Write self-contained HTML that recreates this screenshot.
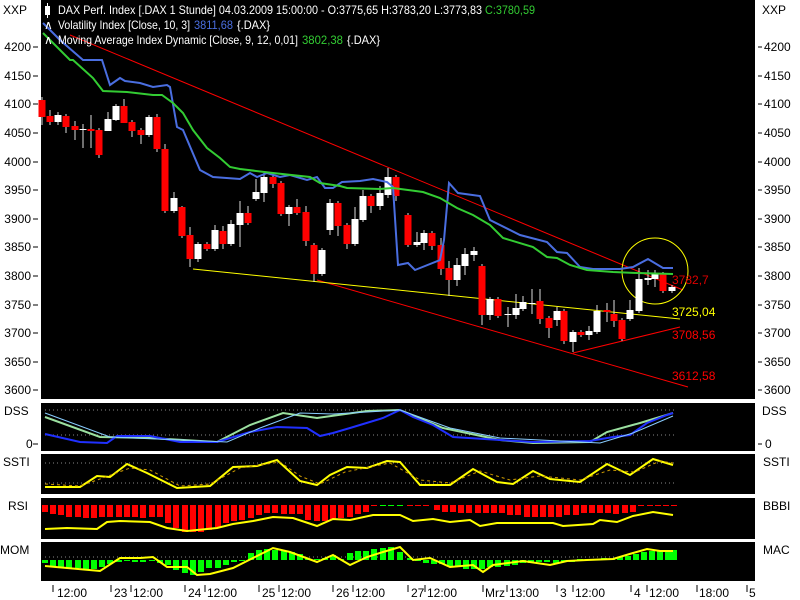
<!DOCTYPE html>
<html><head><meta charset="utf-8"><style>
html,body{margin:0;padding:0;background:#fff;width:800px;height:600px;overflow:hidden}
svg{display:block;font-family:"Liberation Sans",sans-serif;font-size:12px}
</style></head><body>
<svg width="800" height="600" viewBox="0 0 800 600" xmlns="http://www.w3.org/2000/svg">
<rect x="0" y="0" width="800" height="600" fill="#fff"/>
<rect x="41" y="0" width="714" height="399" fill="#000"/>
<rect x="41" y="403" width="714" height="48" fill="#000"/>
<rect x="41" y="454" width="714" height="40" fill="#000"/>
<rect x="41" y="498" width="714" height="41" fill="#000"/>
<rect x="41" y="542" width="714" height="39" fill="#000"/>

<!-- trend lines -->
<line x1="70" y1="35" x2="683" y2="290" stroke="#f00" stroke-width="1"/>
<line x1="317" y1="280" x2="688" y2="387" stroke="#f00" stroke-width="1"/>
<line x1="573" y1="353" x2="680" y2="327" stroke="#f00" stroke-width="1"/>
<line x1="193" y1="269" x2="680" y2="319" stroke="#ff0" stroke-width="1"/>
<circle cx="655" cy="271" r="33" fill="none" stroke="#ff0" stroke-width="1"/>

<!-- candles -->
<g stroke="#ddd" stroke-width="1">
<path d="M42 97V125M50 110V125M58 112V125M66 114V133M75 121V140M83 124V148M91 115V148M99 128V158M108 112V131M116 104V121M124 99V123M132 120V137M141 128V144M149 115V137M157 114V152M165 144V213M174 192V213M182 206V238M190 227V267M198 242V262M207 242V251M215 225V251M223 226V249M231 220V246M240 201V247M248 206V225M256 179V201M264 173V202M273 175V188M281 181V216M289 205V226M297 199V215M306 206V246M314 243V282M322 248V276M330 199V235M338 201V236M347 223V249M355 207V246M363 190V222M371 194V213M380 186V210M388 168V198M396 175V201M408 213V247M417 232V247M424 230V250M432 231V250M441 238V275M449 261V296M457 258V286M465 248V275M474 247V261M482 264V325M490 297V320M498 297V318M508 307V327M516 294V319M523 296V311M532 289V314M540 289V324M549 316V338M557 307V326M564 309V344M573 330V352M581 330V337M589 326V340M597 305V334M607 303V322M614 300V327M622 318V341M630 300V321M639 268V313M648 270V285M655 270V287M663 272V293M672 285V293"/>
</g>
<g fill="#f00">
<rect x="38.5" y="100" width="7" height="17"/><rect x="46.5" y="116" width="7" height="6"/><rect x="62.5" y="116" width="7" height="11"/><rect x="71.5" y="126" width="7" height="4"/><rect x="87.5" y="129" width="7" height="2"/><rect x="95.5" y="130" width="7" height="25"/><rect x="120.5" y="106" width="7" height="17"/><rect x="128.5" y="122" width="7" height="9"/><rect x="137.5" y="130" width="7" height="5"/><rect x="153.5" y="117" width="7" height="32"/><rect x="161.5" y="149" width="7" height="62"/><rect x="178.5" y="207" width="7" height="29"/><rect x="186.5" y="235" width="7" height="24"/><rect x="203.5" y="244" width="7" height="5"/><rect x="219.5" y="231" width="7" height="13"/><rect x="244.5" y="213" width="7" height="10"/><rect x="269.5" y="177" width="7" height="7"/><rect x="277.5" y="183" width="7" height="31"/><rect x="293.5" y="207" width="7" height="6"/><rect x="302.5" y="212" width="7" height="29"/><rect x="310.5" y="245" width="7" height="29"/><rect x="334.5" y="203" width="7" height="23"/><rect x="343.5" y="225" width="7" height="19"/><rect x="367.5" y="196" width="7" height="10"/><rect x="392.5" y="177" width="7" height="19"/><rect x="404.5" y="215" width="7" height="30"/><rect x="428.5" y="233" width="7" height="13"/><rect x="437.5" y="245" width="7" height="24"/><rect x="445.5" y="268" width="7" height="12"/><rect x="478.5" y="266" width="7" height="49"/><rect x="494.5" y="299" width="7" height="17"/><rect x="536.5" y="301" width="7" height="18"/><rect x="545.5" y="318" width="7" height="10"/><rect x="560.5" y="311" width="7" height="30"/><rect x="577.5" y="332" width="7" height="3"/><rect x="603.5" y="310" width="7" height="2"/><rect x="610.5" y="314" width="7" height="7"/><rect x="618.5" y="320" width="7" height="19"/><rect x="659.5" y="274" width="7" height="17"/>
</g>
<g fill="#fff">
<rect x="54.5" y="115" width="7" height="7"/><rect x="79.5" y="129" width="7" height="1"/><rect x="104.5" y="119" width="7" height="12"/><rect x="112.5" y="106" width="7" height="14"/><rect x="145.5" y="117" width="7" height="18"/><rect x="170.5" y="198" width="7" height="13"/><rect x="194.5" y="244" width="7" height="15"/><rect x="211.5" y="230" width="7" height="19"/><rect x="227.5" y="224" width="7" height="20"/><rect x="236.5" y="213" width="7" height="12"/><rect x="252.5" y="192" width="7" height="7"/><rect x="260.5" y="177" width="7" height="16"/><rect x="285.5" y="207" width="7" height="7"/><rect x="318.5" y="250" width="7" height="24"/><rect x="326.5" y="203" width="7" height="27"/><rect x="351.5" y="219" width="7" height="25"/><rect x="359.5" y="196" width="7" height="24"/><rect x="376.5" y="193" width="7" height="13"/><rect x="384.5" y="177" width="7" height="18"/><rect x="413.5" y="242" width="7" height="3"/><rect x="420.5" y="233" width="7" height="10"/><rect x="453.5" y="265" width="7" height="15"/><rect x="461.5" y="254" width="7" height="12"/><rect x="470.5" y="251" width="7" height="4"/><rect x="486.5" y="299" width="7" height="16"/><rect x="504.5" y="314" width="7" height="1"/><rect x="512.5" y="308" width="7" height="7"/><rect x="519.5" y="302" width="7" height="7"/><rect x="528.5" y="303" width="7" height="1"/><rect x="553.5" y="311" width="7" height="9"/><rect x="569.5" y="332" width="7" height="10"/><rect x="585.5" y="331" width="7" height="4"/><rect x="593.5" y="311" width="7" height="21"/><rect x="626.5" y="310" width="7" height="9"/><rect x="635.5" y="279" width="7" height="32"/><rect x="644.5" y="278" width="7" height="2"/><rect x="651.5" y="274" width="7" height="5"/><rect x="668.5" y="287" width="7" height="4"/>
</g>

<!-- blue and green lines -->
<polyline fill="none" stroke="#4a6ee0" stroke-width="2" points="43,23 60,40 83,60 102,60 110,85 120,78 125,81 140,83 153,87 167,85 170,87 177,127 183,130 200,170 213,177 240,179 250,173 257,177 267,173 280,177 290,175 307,180 317,177 325,188 333,188 342,182 360,181 373,179 387,182 393,187 398,265 408,263 415,270 440,260 444,240 449,183 458,193 480,196 490,220 520,235 547,242 557,252 567,253 580,267 593,269 620,269 633,267 648,259 663,268 673,268"/>
<polyline fill="none" stroke="#3c3" stroke-width="2" points="43,33 47,37 70,60 73,60 93,78 103,91 127,92 153,95 162,95 173,103 183,113 193,130 207,148 220,158 230,167 240,169 273,173 310,177 320,183 340,186 347,188 380,189 393,188 423,192 440,198 457,208 473,215 490,225 503,238 533,247 547,257 557,258 570,265 587,270 613,272 637,273 673,274"/>

<!-- header -->
<rect x="45" y="6" width="5" height="9" fill="#fff"/><line x1="47.5" y1="3" x2="47.5" y2="18" stroke="#fff"/>
<text x="58" y="14" fill="#fff" textLength="424" lengthAdjust="spacingAndGlyphs">DAX Perf. Index [.DAX  1 Stunde] 04.03.2009 15:00:00 - O:3775,65 H:3783,20 L:3773,83</text>
<text x="485" y="14" fill="#3c3" textLength="50" lengthAdjust="spacingAndGlyphs">C:3780,59</text>
<text x="44" y="29" fill="#fff">∧</text>
<text x="58" y="29" fill="#fff" textLength="132" lengthAdjust="spacingAndGlyphs">Volatility Index [Close, 10, 3]</text>
<text x="194" y="29" fill="#4a6ee0" textLength="39" lengthAdjust="spacingAndGlyphs">3811,68</text>
<text x="237" y="29" fill="#fff" textLength="33" lengthAdjust="spacingAndGlyphs">{.DAX}</text>
<text x="44" y="44" fill="#fff">∧</text>
<text x="58" y="44" fill="#fff" textLength="240" lengthAdjust="spacingAndGlyphs">Moving Average Index Dynamic [Close, 9, 12, 0,01]</text>
<text x="302" y="44" fill="#3c3" textLength="41" lengthAdjust="spacingAndGlyphs">3802,38</text>
<text x="347" y="44" fill="#fff" textLength="33" lengthAdjust="spacingAndGlyphs">{.DAX}</text>

<!-- in-chart labels -->
<text x="672" y="284" fill="#d00">3782,7</text>
<text x="672" y="316" fill="#ff0">3725,04</text>
<text x="672" y="339" fill="#f00">3708,56</text>
<text x="672" y="380" fill="#f00">3612,58</text>

<!-- axes labels -->
<g fill="#000">
<text x="3" y="14">XXP</text><text x="762" y="14">XXP</text>
<g text-anchor="end">
<text x="31" y="51">4200</text><text x="31" y="80">4150</text><text x="31" y="108">4100</text><text x="31" y="137">4050</text><text x="31" y="166">4000</text><text x="31" y="194">3950</text><text x="31" y="223">3900</text><text x="31" y="251">3850</text><text x="31" y="280">3800</text><text x="31" y="309">3750</text><text x="31" y="337">3700</text><text x="31" y="366">3650</text><text x="31" y="394">3600</text>
</g>
<text x="764" y="51">4200</text><text x="764" y="80">4150</text><text x="764" y="108">4100</text><text x="764" y="137">4050</text><text x="764" y="166">4000</text><text x="764" y="194">3950</text><text x="764" y="223">3900</text><text x="764" y="251">3850</text><text x="764" y="280">3800</text><text x="764" y="309">3750</text><text x="764" y="337">3700</text><text x="764" y="366">3650</text><text x="764" y="394">3600</text>
</g>
<g stroke="#000">
<path d="M33 47H38M33 76H38M33 104H38M33 133H38M33 162H38M33 190H38M33 219H38M33 247H38M33 276H38M33 305H38M33 333H38M33 362H38M33 390H38"/>
<path d="M758 47H762M758 76H762M758 104H762M758 133H762M758 162H762M758 190H762M758 219H762M758 247H762M758 276H762M758 305H762M758 333H762M758 362H762M758 390H762"/>
<path d="M33 444H38M758 444H762"/>
</g>
<g fill="#000">
<text x="4" y="415">DSS</text><text x="762" y="415">DSS</text>
<text x="26" y="448">0</text><text x="765" y="448">0</text>
<text x="3" y="466">SSTI</text><text x="763" y="466">SSTI</text>
<text x="8" y="510">RSI</text><text x="763" y="510">BBBI</text>
<text x="0" y="554">MOM</text><text x="763" y="554">MAC</text>
</g>

<!-- sub-panel dotted lines -->
<g stroke="#888" stroke-dasharray="1,3">
<path d="M45 410H674M45 435H674M45 463H674M45 483H674M45 557H674"/>
</g>

<!-- DSS -->
<polyline fill="none" stroke="#9be0a0" stroke-width="2" points="45,417 100,437 150,438 217,442 250,425 283,413 317,418 367,411 400,410 443,428 500,440 533,443 590,442 607,432 640,423 673,413"/>
<polyline fill="none" stroke="#2030ff" stroke-width="2" points="45,434 80,442 107,443 117,436 150,436 180,442 217,442 250,432 277,427 307,428 320,436 333,433 350,428 383,418 400,410 413,417 433,425 453,437 500,440 533,442 590,441 613,437 630,435 647,423 667,415 673,413"/>
<polyline fill="none" stroke="#8cf" stroke-width="1" points="45,413 110,437 227,442 260,428 300,413 333,414 400,410 450,428 500,438 600,443 633,433 673,416"/>

<!-- SSTI -->
<polyline fill="none" stroke="#ff0" stroke-width="2" points="45,487 80,487 97,476 110,477 127,464 147,473 177,488 210,486 233,467 257,466 277,460 300,481 317,485 330,475 347,467 367,468 387,461 400,462 420,485 450,485 473,469 497,482 513,484 533,471 550,479 580,482 607,464 630,475 653,459 673,465"/>
<polyline fill="none" stroke="#c90" stroke-width="1" stroke-dasharray="3,3" points="45,484 80,486 100,479 130,468 150,470 180,486 210,484 240,468 280,462 300,476 320,484 345,472 390,463 420,480 450,483 480,471 510,480 540,476 580,480 610,470 635,472 660,461 673,463"/>

<!-- RSI bars -->
<path fill="none" stroke="#f00" stroke-width="6" d="M45 505V512M53 505V514M61 505V515M69 505V517M78 505V517M86 505V518M94 505V518M102 505V517M110 505V517M119 505V517M127 505V517M135 505V517M143 505V518M152 505V517M160 505V517M168 505V523M176 505V528M185 505V532M193 505V532M201 505V532M209 505V530M218 505V527M226 505V523M234 505V521M242 505V520M251 505V518M259 505V515M267 505V513M275 505V513M284 505V514M292 505V514M300 505V514M308 505V520M317 505V521M325 505V521M333 505V520M341 505V518M350 505V517M358 505V514M366 505V512M374 505V506M410 505V506M418 505V506M426 505V506M437 505V510M445 505V512M453 505V512M461 505V513M469 505V513M478 505V513M486 505V513M494 505V513M502 505V513M510 505V515M518 505V515M527 505V517M535 505V517M543 505V517M551 505V517M559 505V517M567 505V515M576 505V515M584 505V513M592 505V513M600 505V513M608 505V513M616 505V514M625 505V513M633 505V512M641 505V506M650 505V506M658 505V506M666 505V506M674 505V506"/>
<path fill="none" stroke="#0f0" stroke-width="6" d="M383 505V506M391 505V506M400 505V506"/>
<polyline fill="none" stroke="#ff0" stroke-width="2" points="45,529 67,528 97,529 107,522 120,521 150,522 167,528 187,531 217,528 233,524 253,521 273,517 293,518 317,526 333,519 350,520 373,515 400,515 413,521 433,519 450,522 470,520 480,526 497,523 553,523 563,526 593,524 600,520 617,522 633,516 653,512 673,515"/>

<!-- MOM bars -->
<path fill="none" stroke="#0f0" stroke-width="6" d="M45 560V563M53 560V566M61 560V567M69 560V568M78 560V568M86 560V570M94 560V569M102 560V567M110 560V564M119 560V562M127 560V561M135 560V562M143 560V562M152 560V561M160 560V563M168 560V565M176 560V570M185 560V573M193 560V575M201 560V572M209 560V568M218 560V568M226 560V565M234 560V562M242 560V561M251 560V553M259 560V550M267 560V549M275 560V550M284 560V551M292 560V552M300 560V554M308 560V559M317 560V559M325 560V558M333 560V555M341 560V559M350 560V553M358 560V551M366 560V551M374 560V549M383 560V548M391 560V547M400 560V552M410 560V558M418 560V561M426 560V563M434 560V564M442 560V564M450 560V566M458 560V567M466 560V569M474 560V569M482 560V569M490 560V567M498 560V567M507 560V566M515 560V565M523 560V563M531 560V563M539 560V562M547 560V562M556 560V563M564 560V562M572 560V562M580 560V559M588 560V559M596 560V559M604 560V558M612 560V559M620 560V557M628 560V556M636 560V554M644 560V552M652 560V551M660 560V550M668 560V551M674 560V550"/>
<polyline fill="none" stroke="#ff0" stroke-width="2" points="45,566 67,568 100,571 120,558 140,558 153,557 167,567 187,567 197,575 210,574 233,568 253,558 273,548 290,552 317,562 333,555 350,565 367,557 383,552 400,547 413,560 430,558 450,567 473,565 483,572 493,565 523,561 550,565 567,561 587,560 613,559 633,553 647,549 660,551 673,551"/>

<!-- time axis -->
<g stroke="#000">
<path d="M53 585V592M111 585V592M131 585V592M185 585V592M205 585V592M259 585V592M279 585V592M333 585V592M353 585V592M408 585V592M425 585V592M483 585V592M507 585V592M557 585V592M573 585V592M631 585V592M647 585V592M697 585V592M747 585V592"/>
</g>
<g fill="#000">
<text x="57" y="597">12:00</text>
<text x="114" y="597">23</text><text x="133" y="597">12:00</text>
<text x="188" y="597">24</text><text x="207" y="597">12:00</text>
<text x="262" y="597">25</text><text x="281" y="597">12:00</text>
<text x="336" y="597">26</text><text x="355" y="597">12:00</text>
<text x="411" y="597">27</text><text x="427" y="597">12:00</text>
<text x="485" y="597">Mrz</text><text x="509" y="597">13:00</text>
<text x="560" y="597">3</text><text x="575" y="597">12:00</text>
<text x="634" y="597">4</text><text x="649" y="597">12:00</text>
<text x="699" y="597">18:00</text>
<text x="749" y="597">5</text>
</g>
</svg>
</body></html>
